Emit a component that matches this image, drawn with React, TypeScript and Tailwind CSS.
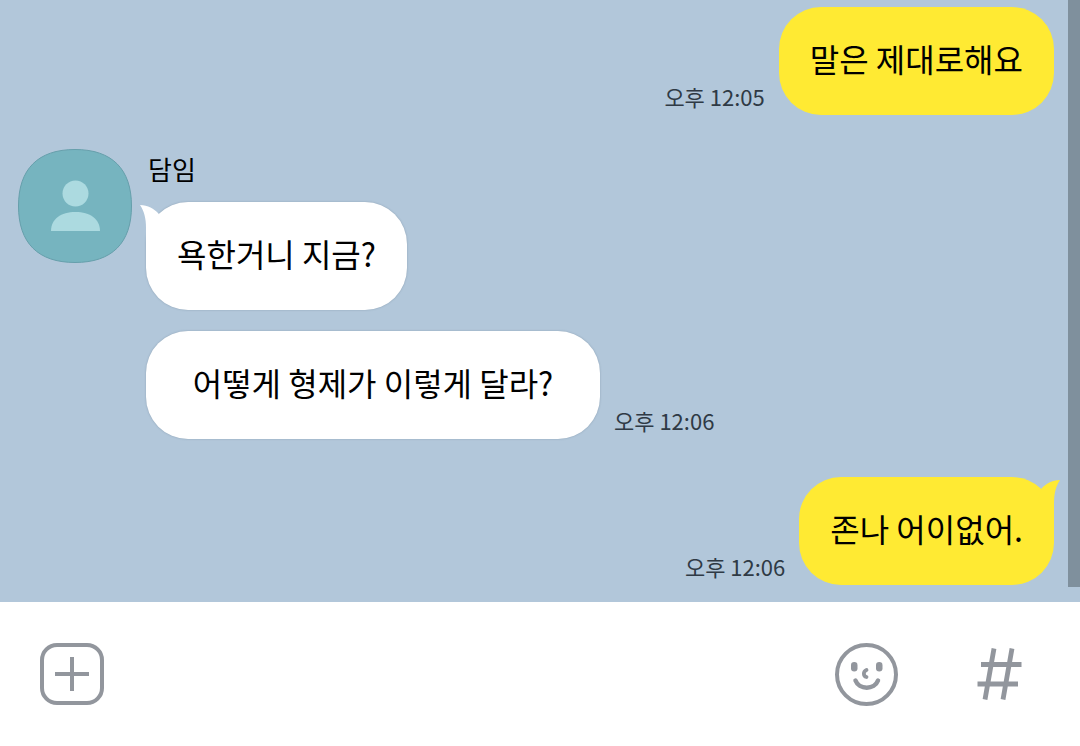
import clsx from 'clsx';

interface BubbleProps {
  text: string;
  mine?: boolean;
  tail?: boolean;
  className?: string;
}

const Bubble: React.FC<BubbleProps> = ({ text, mine, tail, className }) => {
  return (
    <div
      className={clsx(
        'relative flex h-[108px] items-center justify-center rounded-[42px] px-[31px] pb-[6px] text-[32px] leading-10 text-black',
        mine ? 'bg-[#ffea33]' : 'bg-white shadow-[0_0_2px_rgba(60,80,100,0.35)]',
        className
      )}
    >
      {/* Tail */}
      {tail && (
        <svg
          viewBox="0 0 22 44"
          className={clsx(
            'absolute top-[2px] h-11 w-[22px]',
            mine ? 'right-[-6px] -scale-x-100 text-[#ffea33]' : 'left-[-6px] text-white'
          )}
          fill="currentColor"
        >
          <path d="M0 1C8 1.5 14 4.5 18.500 9.500L22 20L10 44H6V24C6 14 4 7 0 1Z" />
        </svg>
      )}
      <p className="whitespace-nowrap">{text}</p>
    </div>
  );
};

const Time = ({ value }: { value: string }) => (
  <time className="mb-[5px] text-[22px] leading-7 text-[#2f3a45]">{value}</time>
);

const Avatar = () => (
  <svg viewBox="0 0 114 114" className="size-[114px] shrink-0" role="img" aria-label="담임">
    <path
      d="M57 .5C94 .5 113.500 20 113.500 57S94 113.500 57 113.500.500 94 .500 57 20 .500 57 .5Z"
      fill="#76b4bf"
      stroke="#669fab"
    />
    <circle cx="57.500" cy="44.500" r="13" fill="#acdae0" />
    <path d="M33 82C33 70 43 63 57.500 63S82 70 82 82Z" fill="#acdae0" />
  </svg>
);

export default function App() {
  return (
    <div className="flex min-h-screen flex-col bg-white font-['Noto_Sans_CJK_KR',sans-serif]">
      {/* Messages */}
      <main className="relative bg-[#b2c7da] pt-[7px] pr-[26px] pb-[17px] pl-[18px]">
        <div className="flex items-end justify-end gap-[14px]">
          <Time value="오후 12:05" />
          <Bubble mine text="말은 제대로해요" />
        </div>

        <div className="mt-[34px] flex items-start gap-[14px]">
          <Avatar />
          <div>
            <h2 className="mb-[13px] pl-[2px] text-[26px] leading-10 text-black">담임</h2>
            <div className="flex flex-col items-start gap-[21px]">
              <Bubble tail text="욕한거니 지금?" />
              <div className="flex items-end gap-[14px]">
                <Bubble text="어떻게 형제가 이렇게 달라?" className="min-w-[454px]" />
                <Time value="오후 12:06" />
              </div>
            </div>
          </div>
        </div>

        <div className="mt-[38px] flex items-end justify-end gap-[14px]">
          <Time value="오후 12:06" />
          <Bubble mine tail text="존나 어이없어." />
        </div>

        {/* Scroll thumb */}
        <div className="absolute top-0 right-0 bottom-[15px] w-3 bg-[#7f909d]" />
      </main>

      {/* Input bar */}
      <footer className="flex min-h-36 flex-1 items-center justify-between bg-white px-10 text-[#92969d]">
        <button type="button" aria-label="첨부">
          <svg viewBox="0 0 64 62" className="h-[62px] w-16" fill="none" stroke="currentColor" strokeWidth="4">
            <rect x="2" y="2" width="60" height="58" rx="15" />
            <path d="M15 31H49M32 14V48" />
          </svg>
        </button>
        <div className="flex items-center gap-[79px] pr-[18px]">
          <button type="button" aria-label="이모티콘">
            <svg viewBox="0 0 63 63" className="size-[63px]" fill="none" stroke="currentColor" strokeWidth="4" strokeLinecap="round">
              <circle cx="31.500" cy="31.500" r="29.500" />
              <path d="M20.500 37.500C24 47 39.500 47 43 37.500" strokeWidth="4.500" />
              <path d="M31.500 27C28 28.500 28 33 31.500 34" strokeWidth="3.800" />
              <rect x="16" y="19" width="6.500" height="9.500" rx="3.200" fill="currentColor" stroke="none" />
              <rect x="41" y="19" width="6.500" height="9.500" rx="3.200" fill="currentColor" stroke="none" />
            </svg>
          </button>
          <button type="button" aria-label="샵검색">
            <svg viewBox="0 0 45 52" className="h-[52px] w-[45px]" fill="none" stroke="currentColor" strokeWidth="4.800">
              <path d="M17 .5L8 51.500M35 .5L26 51.500M4 16.500H44.500M.5 36H41" />
            </svg>
          </button>
        </div>
      </footer>
    </div>
  );
}
